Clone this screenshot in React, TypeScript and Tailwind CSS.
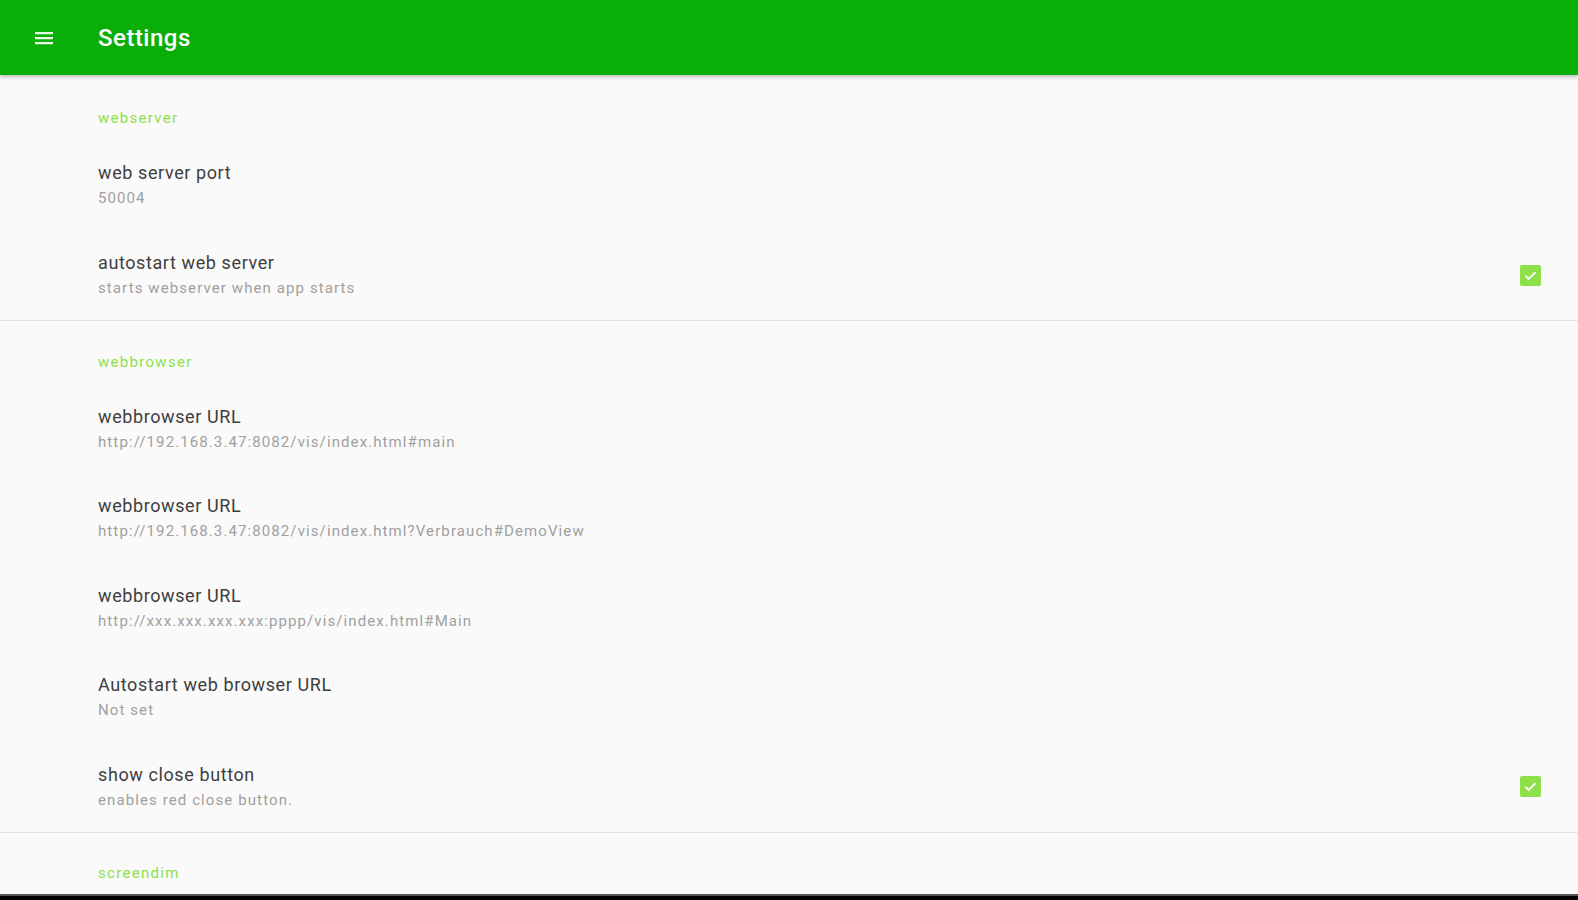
import React from "react";

type Item = { title: string; summary: string; checked?: boolean };

function Check() {
  return (
    <div className="w-[21px] h-[21px] rounded-[2px] bg-[#8ee04a] flex items-center justify-center">
      <svg width="15" height="15" viewBox="0 0 24 24">
        <path d="M4 12.5l5 5L20 6.5" fill="none" stroke="#ffffff" strokeWidth="3" />
      </svg>
    </div>
  );
}

function Pref({ item, h }: { item: Item; h: string }) {
  return (
    <div className={`${h} flex items-center pl-[98px] pr-[37px]`}>
      <div className="flex-1 flex flex-col">
        <div className="text-[18px] leading-[22px] tracking-[0.6px] text-[#3e3e3e]">{item.title}</div>
        <div className="text-[15px] leading-[20px] tracking-[1.1px] mt-[4px] text-[#a0a0a0]">{item.summary}</div>
      </div>
      {item.checked && <Check />}
    </div>
  );
}

function Category({ label, h, pt }: { label: string; h: string; pt: string }) {
  return (
    <div className={`${h} ${pt} pl-[98px]`}>
      <div className="text-[15px] leading-[20px] tracking-[1.3px] text-[#8ee04a]">{label}</div>
    </div>
  );
}

export default function App() {
  const s1: Item[] = [
    { title: "web server port", summary: "50004" },
    { title: "autostart web server", summary: "starts webserver when app starts", checked: true },
  ];
  const s2: Item[] = [
    { title: "webbrowser URL", summary: "http://192.168.3.47:8082/vis/index.html#main" },
    { title: "webbrowser URL", summary: "http://192.168.3.47:8082/vis/index.html?Verbrauch#DemoView" },
    { title: "webbrowser URL", summary: "http://xxx.xxx.xxx.xxx:pppp/vis/index.html#Main" },
    { title: "Autostart web browser URL", summary: "Not set" },
    { title: "show close button", summary: "enables red close button.", checked: true },
  ];
  return (
    <div
      className="w-full h-screen overflow-hidden bg-[#fafafa] flex flex-col"
      style={{ fontFamily: "Roboto, 'Noto Sans', sans-serif" }}
    >
      <div className="relative z-10 h-[75px] shrink-0 bg-[#0aae08] flex items-center shadow-[0_2px_4px_rgba(0,0,0,0.25)]">
        <div className="w-[98px] flex items-center pl-[32px]">
          <svg width="24" height="24" viewBox="0 0 24 24">
            <path d="M3 6h18v2.2H3zM3 11h18v2.2H3zM3 16h18v2.2H3z" fill="#e8f8e8" />
          </svg>
        </div>
        <div className="text-[24px] tracking-[0.5px] font-medium text-white leading-none">Settings</div>
      </div>
      <div className="flex-1 flex flex-col overflow-hidden">
        <Category label="webserver" h="h-[65px] shrink-0" pt="pt-[33px]" />
        {s1.map((it, i) => (
          <Pref key={i} item={it} h="h-[90px] shrink-0" />
        ))}
        <div className="h-px shrink-0 bg-[#e2e2e2]" />
        <Category label="webbrowser" h="h-[63px] shrink-0" pt="pt-[31px]" />
        {s2.map((it, i) => (
          <Pref key={i} item={it} h="h-[89.5px] shrink-0" />
        ))}
        <div className="h-px shrink-0 bg-[#e2e2e2]" />
        <Category label="screendim" h="h-[62px] shrink-0" pt="pt-[30px]" />
      </div>
      <div className="h-[6px] shrink-0 bg-black border-t-[2px] border-[#555]" />
    </div>
  );
}
